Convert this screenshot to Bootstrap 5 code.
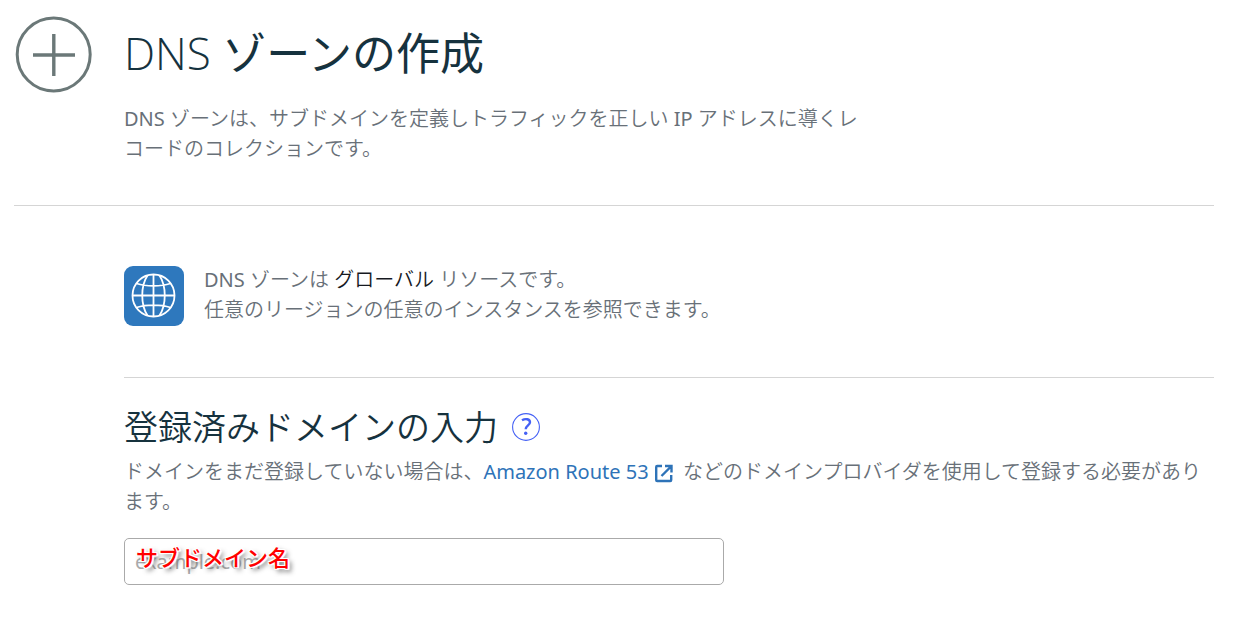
<!DOCTYPE html>
<html lang="ja">
<head>
<meta charset="utf-8">
<meta name="viewport" content="width=device-width, initial-scale=1">
<title>DNS ゾーンの作成</title>
<link href="https://cdn.jsdelivr.net/npm/bootstrap@5.3.0/dist/css/bootstrap.min.css" rel="stylesheet">
<style>
  body { font-family: "Noto Sans", "Noto Sans CJK JP", sans-serif; font-size: 20px; line-height: 30px; font-weight: 350; color: #687078; background: #fff; }
  .page { padding: 14px 20px 48px 14px; }
  .latin { font-weight: 400; }
  .zone-icon { width: 80px; height: 80px; }
  .zone-head { gap: 30px; padding-bottom: 41px; border-bottom: 1px solid #d5d5d5; }
  .zone-title { font-family: "Open Sans", "Noto Sans CJK JP", sans-serif; font-size: 44px; line-height: 60px; font-weight: 400; color: #16323e; margin: 9px 0 21px; }
  .intro { max-width: 740px; }
  .zone-body { margin-left: 110px; }
  .resource { gap: 20px; padding: 60px 0 51px; border-bottom: 1px solid #d5d5d5; }
  .resource p { margin-top: -1px; }
  .resource strong { font-weight: 350; color: #16191f; }
  .domain-title { font-size: 34px; line-height: 50px; font-weight: 350; color: #16323e; }
  .domain-head { gap: 14px; padding-top: 24px; margin-bottom: 5px; }
  .zone-link { color: #2e73b8; font-weight: 400; }
  .zone-link svg { margin-top: -2px; }
  .domain-field { max-width: 600px; margin-top: 21px; }
  .domain-field .form-control { height: 47px; padding: 8px 10px; font-size: 20px; line-height: 28px; border: 1px solid #aaa; border-radius: 5px; }
  .domain-field .form-control::placeholder { color: #aaa; }
  .callout { left: 12px; top: 4px; font-size: 22px; line-height: 30px; font-weight: 500; color: #f00; pointer-events: none;
    text-shadow: 1px 0 #fff, -1px 0 #fff, 0 1px #fff, 0 -1px #fff, 1px 1px #fff, -1px -1px #fff, 1px -1px #fff, -1px 1px #fff, 2px 1px 1px #fff, 3px 3px 5px #555; }
</style>
</head>
<body>
<main class="page">
  <header class="zone-head d-flex align-items-start">
    <svg class="zone-icon flex-shrink-0" viewBox="0 0 80 80" fill="none" stroke="#6b7878" aria-hidden="true">
      <circle cx="39.700" cy="40.500" r="36.500" stroke-width="3"/>
      <path d="M19 41h42M39.800 20v42" stroke-width="3.400"/>
    </svg>
    <div>
      <h1 class="zone-title"><span class="fw-light">DNS</span> ゾーンの作成</h1>
      <p class="intro mb-0"><span class="latin">DNS</span> ゾーンは、サブドメインを定義しトラフィックを正しい <span class="latin">IP</span> アドレスに導くレコードのコレクションです。</p>
    </div>
  </header>

  <div class="zone-body">
    <section class="resource d-flex align-items-start">
      <svg class="flex-shrink-0" width="60" height="60" viewBox="0 0 60 60" fill="none" stroke="#fff" stroke-width="1.800" aria-hidden="true">
        <rect width="60" height="60" rx="9" fill="#2e78bd" stroke="none"/>
        <circle cx="29.500" cy="29.500" r="21"/>
        <path d="M8.500 29.500h42M29.500 8.500v42M23.500 9.500C16.500 20 16.500 39 23.500 49.500M35.500 9.500C42.500 20 42.500 39 35.500 49.500M12.500 17.500C22 20.700 37 20.700 46.500 17.500M12.500 41.500C22 38.300 37 38.300 46.500 41.500"/>
      </svg>
      <p class="mb-0"><span class="latin">DNS</span> ゾーンは <strong>グローバル</strong> リソースです。<br>任意のリージョンの任意のインスタンスを参照できます。</p>
    </section>

    <section>
      <div class="domain-head d-flex align-items-center">
        <h2 class="domain-title mb-0"><label for="domain">登録済みドメインの入力</label></h2>
        <button type="button" class="btn p-0 border-0 d-flex" aria-label="ヘルプ">
          <svg width="28" height="28" viewBox="0 0 28 28" fill="none" stroke="#4561f5" aria-hidden="true">
            <circle cx="14" cy="14" r="13.400" stroke-width="1.100"/>
            <path d="M10 7.300C13.500 5.200 18 6 18 9.300C18 12.400 13.700 12.500 13.700 16.300" stroke-width="2.400"/>
            <circle cx="13.700" cy="20.300" r="1.700" fill="#4561f5" stroke="none"/>
          </svg>
        </button>
      </div>
      <p class="mb-0">ドメインをまだ登録していない場合は、<a class="zone-link text-decoration-none" href="#">Amazon Route 53 <svg width="20" height="20" viewBox="0 0 20 20" fill="none" stroke="currentColor" stroke-width="2.400" aria-hidden="true"><path d="M8 3H3.200Q2.200 3 2.200 4V17Q2.200 18 3.200 18H16.200Q17.200 18 17.200 17V12M11 3H17.500V9.500M17.500 3L7.500 13"/></svg></a> <span class="ms-1">などのドメインプロバイダを使用して登録する必要があります。</span></p>
      <div class="domain-field position-relative">
        <input id="domain" type="text" class="form-control" placeholder="example.com">
        <span class="callout position-absolute">サブドメイン名</span>
      </div>
    </section>
  </div>
</main>
<script src="https://cdn.jsdelivr.net/npm/bootstrap@5.3.0/dist/js/bootstrap.bundle.min.js"></script>
</body>
</html>
